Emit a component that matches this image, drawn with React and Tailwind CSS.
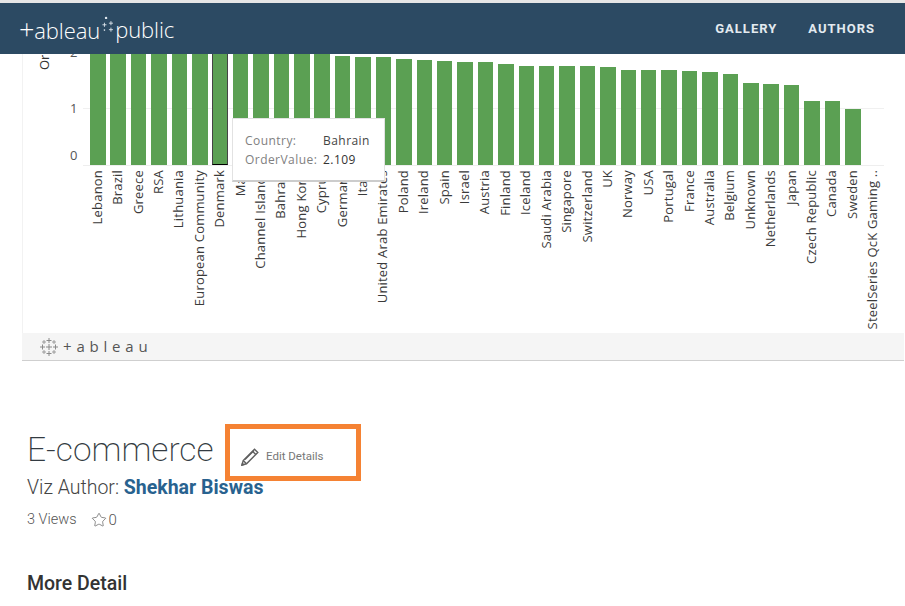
import React from 'react';
import { Star } from 'lucide-react';

// top edge of each bar in page pixels is 165 - h
const bars = [
  ['Lebanon', 120], ['Brazil', 120], ['Greece', 120], ['RSA', 120], ['Lithuania', 120],
  ['European Community', 120], ['Denmark', 120], ['Mali', 120], ['Channel Islands', 120],
  ['Bahrain', 120], ['Hong Kong', 120], ['Cyprus', 120], ['Germany', 109], ['Italy', 108],
  ['United Arab Emirates', 108], ['Poland', 106], ['Ireland', 105], ['Spain', 104],
  ['Israel', 103], ['Austria', 103], ['Finland', 101], ['Iceland', 99], ['Saudi Arabia', 99],
  ['Singapore', 99], ['Switzerland', 99], ['UK', 98], ['Norway', 95], ['USA', 95],
  ['Portugal', 95], ['France', 94], ['Australia', 93], ['Belgium', 91], ['Unknown', 82],
  ['Netherlands', 81], ['Japan', 80], ['Czech Republic', 64], ['Canada', 64], ['Sweden', 56],
  ['SteelSeries QcK Gaming ..', 0],
];

const Sparkles = ({ className }) => (
  <svg viewBox="0 0 16 24" className={className} fill="none" stroke="currentColor" strokeWidth="1.100">
    <circle cx="5" cy="2" r="1.500" fill="currentColor" stroke="none" />
    <path d="M3 8v5M.5 10.500h5" />
    <path d="M11 6v5M8.500 8.500h5" />
    <path d="M11 14v5M8.500 16.500h5" />
    <circle cx="3" cy="17" r="1" fill="currentColor" stroke="none" />
  </svg>
);

const TableauMark = () => (
  <svg viewBox="0 0 18 18" className="w-[18px] h-[18px] text-[#8a8a8a]" fill="none" stroke="currentColor" strokeWidth="1">
    <path d="M9 0v5M6.500 2.500h5M9 13v5M6.500 15.500h5M2.500 6.500v5M0 9h5M15.500 6.500v5M13 9h5" />
    <path d="M9 6v6M6 9h6" />
    <path d="M4 2v4M2 4h4M14 2v4M12 4h4M4 12v4M2 14h4M14 12v4M12 14h4" strokeWidth="0.8" />
  </svg>
);

const Pencil = () => (
  <svg viewBox="0 0 18 18" className="w-[18px] h-[18px] text-[#5f5f5f]" fill="none" stroke="currentColor" strokeWidth="1.400">
    <path d="M1 17l1.200-4.500L13.500 1.200l3.300 3.300L5.500 15.800z" />
    <path d="M2.200 12.500l3.300 3.300M11.500 3.200l3.300 3.300M4 11.500L13 2.500" />
    <path d="M1 17l1.500-.4-1.100-1.100z" fill="currentColor" />
  </svg>
);

export default function App() {
  return (
    <div className="w-[905px] h-[606px] overflow-hidden bg-white font-['Roboto',sans-serif]">
      <div className="h-[3px] bg-[#e6e6e6]" />

      {/* Header */}
      <header className="relative z-20 h-[51px] bg-[#2c4a63] flex items-center justify-between pl-[19px] pr-[30px]">
        <div className="flex items-center text-white font-['Open_Sans',sans-serif] font-light text-[22px] leading-none tracking-[-0.1px]">
          <span><span className="text-[27px]">+</span>ableau</span>
          <Sparkles className="w-[13px] h-[20px] ml-[2px] -mt-[6px] text-[#dfe7ee]" />
          <span>public</span>
        </div>
        <nav className="flex gap-[31px] text-[13px] font-bold tracking-[1px] text-[#e3eaf0]">
          <span>GALLERY</span>
          <span>AUTHORS</span>
        </nav>
      </header>

      {/* Viz */}
      <section className="relative ml-[22px] w-[882px] h-[279px] border-l border-[#f2f2f2] overflow-hidden font-['Open_Sans',sans-serif]">
        <div className="flex h-[112px]">
          <div className="w-[14px] shrink-0" />
          <div className="w-[14px] shrink-0 -mt-[52px] text-[13px] leading-[14px] text-[#333333] [writing-mode:vertical-rl] rotate-180 h-[68px]">
            OrderValue
          </div>
          <div className="w-[19px] shrink-0" />
          <div className="w-[13px] shrink-0 -mt-[10px] text-[13px] leading-[16px] text-[#555555]">
            <div>2</div>
            <div className="mt-[40px]">1</div>
            <div className="mt-[31px]">0</div>
          </div>
          <div className="relative w-[801px] flex items-end pl-[4.55px] border-b border-[#eeeeee] overflow-hidden">
            <div className="absolute left-0 right-0 top-[54px] h-px bg-[#f0f0f0]" />
            {bars.map(([name, h]) => (
              <div key={name} className="relative w-[20.42px] shrink-0 flex justify-center">
                {name === 'Denmark' ? (
                  <div className="w-[15.5px] h-[120px] bg-[#5ba053] border border-[#444444] border-b-black" />
                ) : (
                  <div className="w-[15.5px] bg-[#5ba053]" style={{ height: h }} />
                )}
              </div>
            ))}
          </div>
        </div>

        {/* Country labels */}
        <div className="flex pl-[63.55px] pt-[4px] h-[167px]">
          {bars.map(([name]) => (
            <div key={name} className="w-[20.42px] shrink-0 flex justify-center items-start">
              <span className="[writing-mode:vertical-rl] rotate-180 whitespace-nowrap text-[13px] leading-[16px] tracking-[0.2px] text-[#3a3a3a]">
                {name}
              </span>
            </div>
          ))}
        </div>

        {/* Tooltip */}
        <div className="absolute z-10 left-[209px] top-[64px] w-[153px] h-[64px] bg-white border border-[#e2e2e2] border-b-2 border-b-[#cccccc] text-[12px] leading-[19px] tracking-[0.45px] pl-[12px] pt-[12px]">
          <div className="flex">
            <span className="w-[78px] text-[#808080]">Country:</span>
            <span className="text-[#444444]">Bahrain</span>
          </div>
          <div className="flex">
            <span className="w-[78px] text-[#808080]">OrderValue:</span>
            <span className="text-[#333333]">2.109</span>
          </div>
        </div>
      </section>

      {/* Toolbar */}
      <div className="ml-[22px] w-[882px] h-[28px] bg-[#f5f5f5] border-b border-[#cfcfcf] flex items-center pl-[18px] gap-[5px]">
        <TableauMark />
        <span className="font-['Open_Sans',sans-serif] text-[15px] leading-none tracking-[4.8px] text-[#555555]">+ableau</span>
      </div>

      {/* Title */}
      <div className="pl-[27px] pt-[63px]">
        <div className="flex h-[57px]">
          <h1 className="pt-[6px] text-[33.500px] leading-[40px] font-extralight text-[#333b42] w-[198px]">E-commerce</h1>
          <div className="w-[136px] h-[57px] border-[5px] border-[#f58233] flex items-center pl-[11px] pt-[8px]">
            <Pencil />
            <span className="ml-[7px] text-[11.500px] text-[#777777]">Edit Details</span>
          </div>
        </div>
        <div className="text-[19.500px] leading-[22px] font-light text-[#444444] -mt-[4px]">
          Viz Author: <span className="font-bold text-[#28628f]">Shekhar Biswas</span>
        </div>
        <div className="flex items-center mt-[11px] text-[14.500px] leading-[20px] font-light text-[#555555]">
          <span>3 Views</span>
          <Star className="w-[16px] h-[16px] ml-[14px] mr-[2px]" strokeWidth={1} />
          <span className="text-[15px]">0</span>
        </div>
        <h2 className="mt-[43px] text-[19.500px] leading-[22px] font-medium text-[#333333]">More Detail</h2>
      </div>
    </div>
  );
}
